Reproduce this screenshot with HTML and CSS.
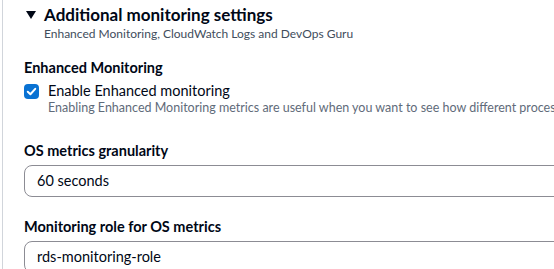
FILE: index.html
```html
<!DOCTYPE html>
<html lang="en">
<head>
  <meta charset="UTF-8" />
  <title>Additional monitoring settings</title>
  <link rel="stylesheet" href="styles.css">
</head>
<body>
  <section class="panel">
    <div class="panel-header">
      <svg class="caret" width="10" height="8" viewBox="0 0 10 8"><path d="M0 0 H10 L5 8 Z" fill="#000716"/></svg>
      <div>
        <h2>Additional monitoring settings</h2>
        <p class="panel-desc">Enhanced Monitoring, CloudWatch Logs and DevOps Guru</p>
      </div>
    </div>

    <div class="field first">
      <div class="field-label">Enhanced Monitoring</div>
      <label class="check">
        <span class="box">
          <svg width="11" height="11" viewBox="0 0 10 10"><path d="M1.6 5.2 L4 7.5 L8.4 2.6" fill="none" stroke="#fff" stroke-width="1.8" stroke-linecap="round" stroke-linejoin="round"/></svg>
        </span>
        <span>Enable Enhanced monitoring</span>
      </label>
      <p class="check-desc">Enabling Enhanced Monitoring metrics are useful when you want to see how different processes or threads use the CPU.</p>
    </div>

    <div class="field second">
      <div class="field-label">OS metrics granularity</div>
      <div class="select">60 seconds</div>
    </div>

    <div class="field">
      <div class="field-label">Monitoring role for OS metrics</div>
      <div class="select">rds-monitoring-role</div>
    </div>
  </section>
</body>
</html>
```

FILE: styles.css
```css
html, body {
  margin: 0;
  padding: 0;
  background-color: white;
  font-family: 'Lato', sans-serif;
  color: #000716;
  overflow: hidden;
}
.panel {
  border-left: 1px solid #d1d5db;
  margin-left: 2px;
  width: 700px;
  padding: 4px 0 0 21px;
  height: 269px;
  box-sizing: border-box;
}
.panel-header {
  display: flex;
  gap: 8px;
  padding-left: 2px;
}
.caret {
  margin-top: 7px;
  flex-shrink: 0;
}
h2 {
  margin: 0;
  font-size: 17px;
  line-height: 22px;
  font-weight: 700;
}
.panel-desc {
  margin: 0;
  font-size: 12px;
  line-height: 16px;
  color: #414d5c;
}
.field {
  margin-top: 20px;
}
.field.first {
  margin-top: 16px;
}
.field.second {
  margin-top: 25px;
}
.field-label {
  font-size: 14.5px;
  font-weight: 700;
  line-height: 20px;
}
.check {
  display: flex;
  align-items: center;
  gap: 9px;
  margin-top: 3px;
  font-size: 14.5px;
  line-height: 20px;
}
.box {
  width: 15px;
  height: 15px;
  border-radius: 4px;
  background-color: #0972d3;
  display: flex;
  align-items: center;
  justify-content: center;
}
.check-desc {
  margin: -1px 0 0 24px;
  font-size: 12.5px;
  line-height: 16px;
  color: #5f6b7a;
  white-space: nowrap;
}
.select {
  margin-top: 4px;
  height: 32px;
  box-sizing: border-box;
  border: 1px solid #8c8c94;
  border-radius: 8px;
  padding: 6px 12px;
  font-size: 14.5px;
  line-height: 18px;
}
```
